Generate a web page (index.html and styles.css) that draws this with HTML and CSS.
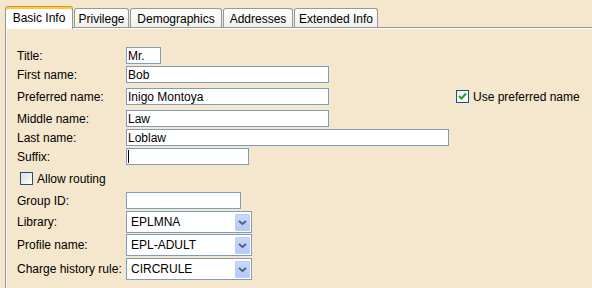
FILE: index.html
```html
<!DOCTYPE html>
<html lang="en">
<head>
  <meta charset="UTF-8">
  <title>Patron - Basic Info</title>
  <link rel="stylesheet" href="styles.css">
</head>
<body>
  <div class="tabs">
    <div class="tab active tab-basic">Basic Info</div>
    <div class="tab tab-priv">Privilege</div>
    <div class="tab tab-demo">Demographics</div>
    <div class="tab tab-addr">Addresses</div>
    <div class="tab tab-ext">Extended Info</div>
  </div>

  <div class="panel">
    <div class="row first">
      <label>Title:</label>
      <input class="field w-title" type="text" value="Mr.">
    </div>
    <div class="row">
      <label>First name:</label>
      <input class="field w-name" type="text" value="Bob">
    </div>
    <div class="row gap">
      <label>Preferred name:</label>
      <input class="field w-name" type="text" value="Inigo Montoya">
      <span class="check use-pref">
        <span class="box checked">
          <svg width="11" height="11" viewBox="0 0 11 11"><polyline points="2,5 4.5,7.5 9,2.5" fill="none" stroke="#21a121" stroke-width="2"/></svg>
        </span>
        Use preferred name
      </span>
    </div>
    <div class="row gap">
      <label>Middle name:</label>
      <input class="field w-name" type="text" value="Law">
    </div>
    <div class="row">
      <label>Last name:</label>
      <input class="field w-last" type="text" value="Loblaw">
    </div>
    <div class="row">
      <label>Suffix:</label>
      <input class="field w-suffix caret" type="text" value="">
    </div>
    <div class="row gap check-row">
      <span class="check">
        <span class="box"></span>
        Allow routing
      </span>
    </div>
    <div class="row gap">
      <label>Group ID:</label>
      <input class="field w-group" type="text" value="">
    </div>
    <div class="row combo-row">
      <label>Library:</label>
      <div class="combo"><span class="combo-text">EPLMNA</span><span class="arrow"><svg width="15" height="17" viewBox="0 0 15 17"><polyline points="4,7 7.5,10 11,7" fill="none" stroke="#4d6185" stroke-width="2"/></svg></span></div>
    </div>
    <div class="row combo-row tight">
      <label>Profile name:</label>
      <div class="combo"><span class="combo-text">EPL-ADULT</span><span class="arrow"><svg width="15" height="17" viewBox="0 0 15 17"><polyline points="4,7 7.5,10 11,7" fill="none" stroke="#4d6185" stroke-width="2"/></svg></span></div>
    </div>
    <div class="row combo-row">
      <label>Charge history rule:</label>
      <div class="combo"><span class="combo-text">CIRCRULE</span><span class="arrow"><svg width="15" height="17" viewBox="0 0 15 17"><polyline points="4,7 7.5,10 11,7" fill="none" stroke="#4d6185" stroke-width="2"/></svg></span></div>
    </div>
  </div>
</body>
</html>
```

FILE: styles.css
```css
html, body {
  height: 100%;
}

body {
  margin: 0;
  background: #f5e6ce;
  font-family: "Liberation Sans", Arial, sans-serif;
  font-size: 12px;
  color: #000;
  overflow: hidden;
  display: flex;
  flex-direction: column;
}

/* tab strip */
.tabs {
  flex: none;
  display: flex;
  align-items: flex-end;
  gap: 1px;
  height: 27px;
  padding-left: 5px;
}

.tab {
  box-sizing: border-box;
  height: 19px;
  padding-top: 2px;
  display: flex;
  align-items: center;
  justify-content: center;
  border: 1px solid #919b9c;
  border-bottom: none;
  border-radius: 3px 3px 0 0;
  background: linear-gradient(#fefefe, #f1f0ea);
}

.tab.active {
  position: relative;
  z-index: 1;
  height: 23px;
  padding-top: 0;
  margin-bottom: -2px;
  background: #fff;
  border-top: 1px solid #e68b2c;
  box-shadow: inset 0 2px 0 #ffc73c;
}

.tab-basic { width: 68px; }
.tab-priv { width: 55px; }
.tab-demo { width: 92px; }
.tab-addr { width: 70px; }
.tab-ext { width: 84px; }

/* content panel */
.panel {
  flex: 1;
  min-height: 0;
  margin-left: 5px;
  border-top: 1px solid #919b9c;
  border-left: 1px solid #919b9c;
  box-shadow: inset 1px 1px 0 #fff;
  padding: 19px 0 0 11px;
}

.row {
  display: flex;
  align-items: center;
  height: 17px;
  margin-top: 2px;
}

.row.first { margin-top: 0; }
.row.gap { margin-top: 5px; }

.row label {
  flex: none;
  width: 109px;
}

.field {
  box-sizing: border-box;
  height: 17px;
  margin: 0;
  padding: 0 1px;
  border: 1px solid #7f9db9;
  background: #fff;
  font: inherit;
  color: #000;
  outline: none;
}

.w-title { width: 35px; }
.w-name { width: 203px; }
.w-last { width: 323px; }
.w-suffix { width: 123px; }
.w-group { width: 115px; }

.caret {
  background: linear-gradient(#000, #000) 1px 1px / 1px 13px no-repeat, #fff;
}

/* checkboxes */
.check {
  display: flex;
  align-items: center;
  gap: 4px;
}

.use-pref { margin-left: 127px; }
.check-row { padding-left: 3px; }

.box {
  box-sizing: border-box;
  width: 13px;
  height: 13px;
  border: 1px solid #1c5180;
  background: linear-gradient(135deg, #dcdcd7, #fff);
  display: flex;
}

.box.checked {
  background: linear-gradient(135deg, #ececea, #fff);
}

/* combo boxes */
.combo-row { height: 22px; }
.combo-row.tight { margin-top: 1px; }

.combo {
  box-sizing: border-box;
  width: 126px;
  height: 22px;
  border: 1px solid #7f9db9;
  background: #fff;
  display: flex;
  align-items: center;
  justify-content: space-between;
  padding: 0 1px 0 4px;
}

.arrow {
  display: flex;
  width: 15px;
  height: 17px;
  border-radius: 2px;
  background: linear-gradient(#cdd9fb, #b4c7f4);
  box-shadow: inset 0 0 0 1px #bccdf3;
}
```
